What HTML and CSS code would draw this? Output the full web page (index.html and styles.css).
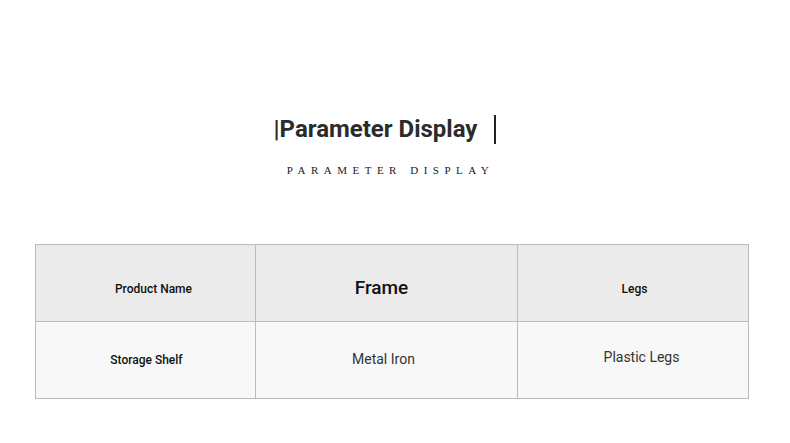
FILE: index.html
```html
<!DOCTYPE html>
<html>
<head>
<meta charset="utf-8">
<link rel="stylesheet" href="styles.css">
</head>
<body>
<div class="page">
  <div class="heading">
    <div class="title-row">
      <span class="title">|Parameter Display</span>
      <span class="bar"></span>
    </div>
    <div class="subtitle">PARAMETER DISPLAY</div>
  </div>
  <table class="params">
    <tr class="head">
      <td class="c1"><span class="t-sm p-name">Product Name</span></td>
      <td class="c2"><span class="t-lg p-frame">Frame</span></td>
      <td class="c3"><span class="t-sm p-legs">Legs</span></td>
    </tr>
    <tr class="body">
      <td class="c1"><span class="t-sm">Storage Shelf</span></td>
      <td class="c2"><span class="t-md">Metal Iron</span></td>
      <td class="c3"><span class="t-md p-plastic">Plastic Legs</span></td>
    </tr>
  </table>
</div>
</body>
</html>
```

FILE: styles.css
```css
html, body {
  margin: 0;
  padding: 0;
  background: #ffffff;
}
body {
  font-family: Roboto, "Liberation Sans", sans-serif;
  width: 790px;
  height: 443px;
  overflow: hidden;
}
.page {
  padding-top: 113px;
}
.heading {
  display: flex;
  flex-direction: column;
  align-items: center;
}
.title-row {
  display: flex;
  align-items: center;
  margin-right: 20px;
}
.title {
  font-size: 24px;
  font-weight: 700;
  color: #2b2b2b;
  line-height: 32px;
}
.bar {
  width: 2px;
  height: 29px;
  background: #222;
  margin-left: 17px;
}
.subtitle {
  margin-top: 19px;
  margin-right: 9px;
  font-family: "Liberation Serif", serif;
  font-size: 11px;
  letter-spacing: 5.5px;
  color: #222;
  line-height: 12px;
}
.params {
  margin: 68px 0 0 35px;
  border-collapse: collapse;
  width: 714px;
}
.params td {
  border: 1px solid #bcbcbc;
  text-align: center;
  vertical-align: middle;
  padding: 0;
}
.head td {
  background: #ebebeb;
  height: 77px;
  padding-top: 9px;
  box-sizing: border-box;
}
.body td {
  background: #f8f8f8;
  height: 77px;
  padding-bottom: 3px;
  box-sizing: border-box;
}
.c1 { width: 219px; }
.c2 { width: 261px; }
.c3 { width: 230px; }
.t-sm {
  font-size: 12px;
  font-weight: 500;
  color: #111;
}
.t-md {
  font-size: 14px;
  color: #333;
}
.t-lg {
  font-size: 19px;
  font-weight: 500;
  color: #111;
}
.p-name { margin-left: 16px; }
.p-frame { margin-right: 10px; }
.p-legs { margin-left: 3px; }
.p-plastic { margin-left: 17px; position: relative; top: -2px; }
.body .c1 .t-sm { margin-left: 2px; }
.body .c2 .t-md { margin-right: 6px; }
```
